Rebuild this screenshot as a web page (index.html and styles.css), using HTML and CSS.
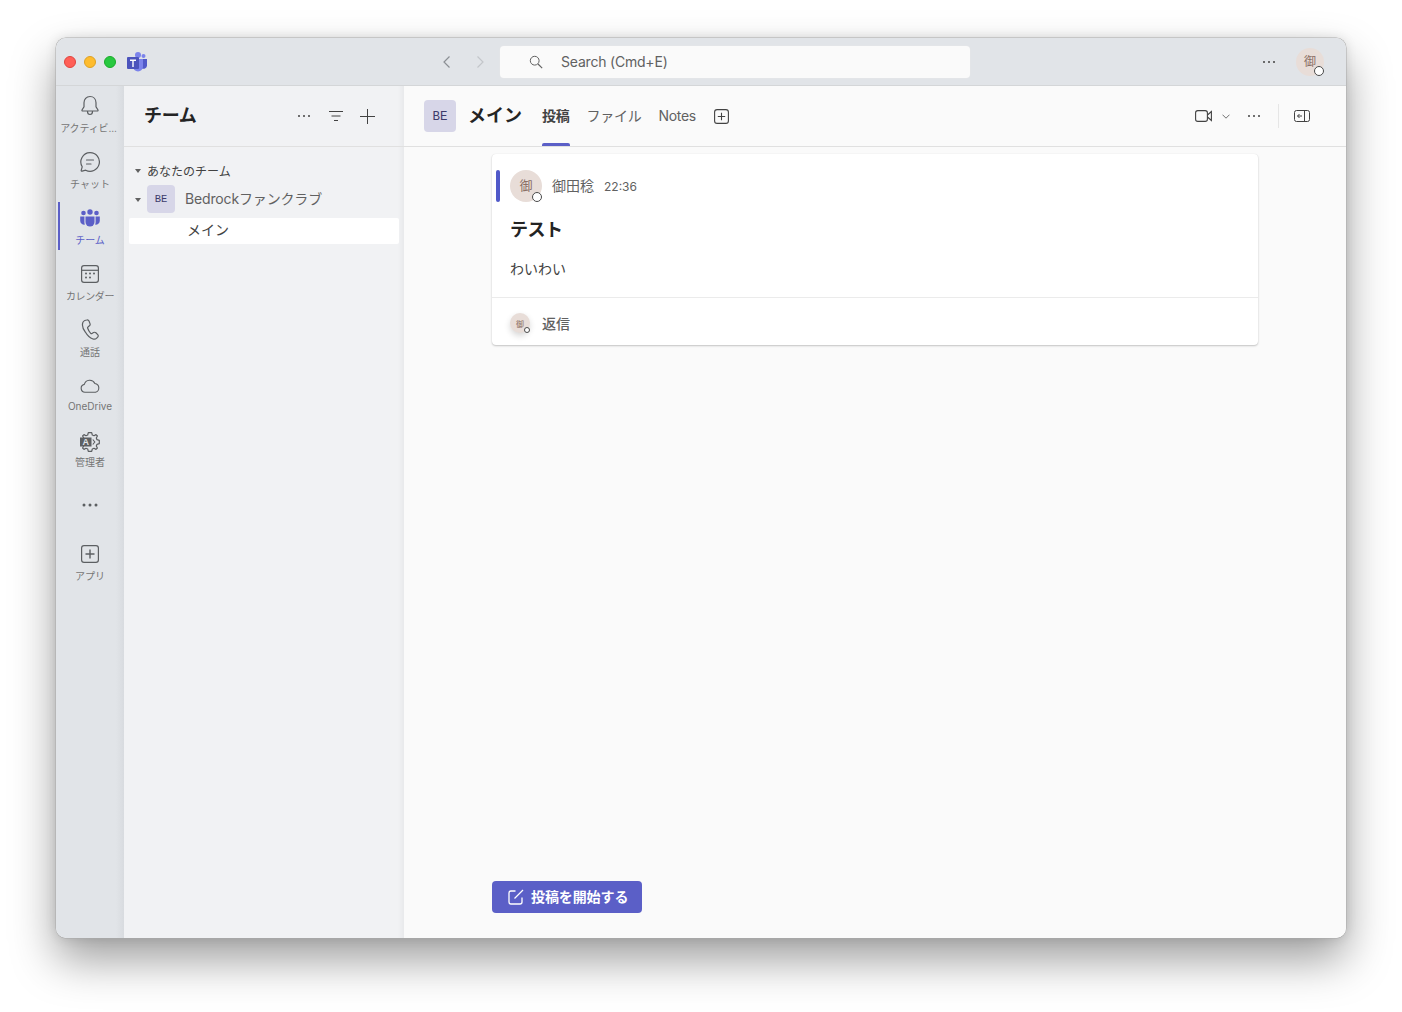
FILE: index.html
```html
<!DOCTYPE html>
<html lang="ja">
<head>
<meta charset="utf-8">
<title>Teams</title>
<link rel="stylesheet" href="styles.css">
</head>
<body>
<div class="window">
  <header class="titlebar">
    <div class="traffic">
      <span class="light red"></span><span class="light yellow"></span><span class="light green"></span>
      <svg class="logo" width="22" height="20" viewBox="0 0 22 20"><circle cx="17.500" cy="4" r="2" fill="#7b83eb"/><path d="M14 7h7v6.500a3.500 3.500 0 0 1-5 3z" fill="#5059c9"/><circle cx="12" cy="3" r="3" fill="#7b83eb"/><path d="M7 7h10v7.500a5 5 0 0 1-10 0z" fill="#7b83eb"/><rect x="1" y="5" width="12" height="12" rx="1" fill="#4b53bc"/><path d="M4 7.600h6v1.300H7.700v6H6.300v-6H4z" fill="#fff"/></svg>
    </div>
    <div class="nav-search">
      <svg class="nav-arrow" width="12" height="14" viewBox="0 0 12 14"><path d="M8.500 1.500 3 7l5.500 5.500" fill="none" stroke="#8b8f94" stroke-width="1.200"/></svg>
      <svg class="nav-arrow" width="12" height="14" viewBox="0 0 12 14"><path d="M3.500 1.500 9 7l-5.500 5.500" fill="none" stroke="#c3c6ca" stroke-width="1.200"/></svg>
      <div class="search">
        <svg width="14" height="14" viewBox="0 0 14 14"><circle cx="5.700" cy="5.700" r="4.400" fill="none" stroke="#616161" stroke-width="1"/><path d="m9 9 4.200 4.200" stroke="#616161" stroke-width="1.100"/></svg>
        <span>Search (Cmd+E)</span>
      </div>
    </div>
    <div class="title-right">
      <svg class="dots" width="14" height="4" viewBox="0 0 14 4"><circle cx="2" cy="2" r="1" fill="#424242"/><circle cx="7" cy="2" r="1" fill="#424242"/><circle cx="12" cy="2" r="1" fill="#424242"/></svg>
      <div class="avatar avatar-top"><b>御</b><i class="presence"></i></div>
    </div>
  </header>
  <div class="body">
    <nav class="rail">
      <div class="rail-item">
        <svg width="20" height="22" viewBox="0 0 20 22"><path d="M10 1.500c3.700 0 6 2.800 6 6.300v4l2 3.200a.7.700 0 0 1-.6 1H2.600a.7.700 0 0 1-.6-1l2-3.200v-4c0-3.500 2.300-6.300 6-6.300zM7.500 16.500c0 1.800 1.100 3 2.500 3s2.500-1.200 2.500-3" fill="none" stroke="#5c5f62" stroke-width="1.200"/></svg>
        <span class="trunc">アクティビ...</span>
      </div>
      <div class="rail-item">
        <svg width="20" height="20" viewBox="0 0 20 20"><path d="M10 .7a9.300 9.300 0 1 1-4.300 17.500l-3.600 1c-.6.100-1-.3-.9-.9l1-3.500A9.300 9.300 0 0 1 10 .7z" fill="none" stroke="#5c5f62" stroke-width="1.200"/><path d="M6.500 8h7M6.500 12h4.500" stroke="#5c5f62" stroke-width="1.200" stroke-linecap="round"/></svg>
        <span>チャット</span>
      </div>
      <div class="rail-item active">
        <svg width="20" height="18" viewBox="0 0 20 18"><circle cx="10" cy="3" r="2.700" fill="#5b5fc7"/><circle cx="3.500" cy="4" r="2.300" fill="#5b5fc7"/><circle cx="16.500" cy="4" r="2.300" fill="#5b5fc7"/><path d="M5.500 7.500h9v5.500a4.500 4.500 0 0 1-9 0z" fill="#5b5fc7"/><path d="M.2 7.500h4.200v6c0 .8.200 1.500.5 2.100A4 4 0 0 1 .2 11.700zM15.600 7.500h4.200v4.200a4 4 0 0 1-4.700 3.900c.3-.6.500-1.300.5-2.100z" fill="#5b5fc7"/></svg>
        <span>チーム</span>
      </div>
      <div class="rail-item">
        <svg width="18" height="18" viewBox="0 0 18 18"><rect x=".6" y=".6" width="16.800" height="16.800" rx="2.400" fill="none" stroke="#5c5f62" stroke-width="1.200"/><path d="M1 5.300h16" stroke="#5c5f62" stroke-width="1.200"/><g fill="#5c5f62"><circle cx="5" cy="8.500" r="1"/><circle cx="9" cy="8.500" r="1"/><circle cx="13" cy="8.500" r="1"/><circle cx="5" cy="12.500" r="1"/><circle cx="9" cy="12.500" r="1"/></g></svg>
        <span class="narrow">カレンダー</span>
      </div>
      <div class="rail-item">
        <svg width="18" height="22" viewBox="0 0 18 22"><path d="M3.800 1.500 5.700 1c1-.3 1.900.2 2.300 1.100l1 2.500c.3.800.1 1.700-.6 2.200L7 8c-.4.300-.5.800-.3 1.300.6 1.800 1.700 3.700 3 5 .4.400.9.400 1.300.2l1.500-.9c.8-.5 1.700-.4 2.400.2l1.800 1.800c.7.700.7 1.800 0 2.500l-1 1c-1 1-2.400 1.300-3.700.9-3-1-5.500-3.200-7.500-6.700C1.600 9.800 1 6.700 1.700 4c.2-1.200 1-2.100 2.100-2.500z" fill="none" stroke="#5c5f62" stroke-width="1.200"/></svg>
        <span>通話</span>
      </div>
      <div class="rail-item tight">
        <svg width="20" height="14" viewBox="0 0 20 14"><path d="M5 13.300a4 4 0 0 1-.7-7.900 5.700 5.700 0 0 1 10.600-.9A4.500 4.500 0 0 1 15.500 13.300z" fill="none" stroke="#5c5f62" stroke-width="1.100"/></svg>
        <span>OneDrive</span>
      </div>
      <div class="rail-item tight">
        <svg width="20" height="20" viewBox="0 0 20 20"><path d="M8.300.7h3.400l.6 2.300 1.700.7 2-1.100L17.400 4l-1.100 2 .7 1.700 2.300.6v3.400l-2.300.6-.7 1.700 1.100 2-1.400 1.400-2-1.100-1.700.7-.6 2.300H8.300L7.700 17 6 16.300l-2 1.100L2.600 16l1.100-2-.7-1.700-2.300-.6V8.300L3 7.700 3.700 6 2.600 4 4 2.600l2 1.100L7.700 3z" fill="none" stroke="#5c5f62" stroke-width="1.200" stroke-linejoin="round"/><rect x="0" y="5.500" width="11.500" height="9" fill="#5c5f62"/><text class="admin-a" x="5.800" y="13.200" text-anchor="middle">A</text><path d="M12.800 7.500l2 2.500-2 2.500" fill="none" stroke="#5c5f62" stroke-width="1.100"/></svg>
        <span>管理者</span>
      </div>
      <div class="rail-more">
        <svg width="16" height="4" viewBox="0 0 16 4"><g fill="#5c5f62"><circle cx="2" cy="2" r="1.500"/><circle cx="8" cy="2" r="1.500"/><circle cx="14" cy="2" r="1.500"/></g></svg>
      </div>
      <div class="rail-item apps">
        <svg width="18" height="18" viewBox="0 0 18 18"><rect x=".6" y=".6" width="16.800" height="16.800" rx="2.400" fill="none" stroke="#5c5f62" stroke-width="1.200"/><path d="M9 4.500v9M4.500 9h9" stroke="#5c5f62" stroke-width="1.400"/></svg>
        <span>アプリ</span>
      </div>
    </nav>
    <aside class="sidebar">
      <div class="side-head">
        <h2>チーム</h2>
        <div class="side-actions">
          <svg width="14" height="4" viewBox="0 0 14 4"><g fill="#424242"><circle cx="2" cy="2" r="1"/><circle cx="7" cy="2" r="1"/><circle cx="12" cy="2" r="1"/></g></svg>
          <svg width="14" height="10" viewBox="0 0 14 10"><path d="M0 .5h14M2.500 5h9M5 9.500h4" stroke="#424242" stroke-width="1"/></svg>
          <svg class="side-plus" width="15" height="15" viewBox="0 0 15 15"><path d="M7.500 0v15M0 7.500h15" stroke="#424242" stroke-width="1"/></svg>
        </div>
      </div>
      <div class="tree">
        <div class="tree-group"><i class="caret"></i><span>あなたのチーム</span></div>
        <div class="tree-team"><i class="caret"></i><div class="team-badge">BE</div><span>Bedrockファンクラブ</span></div>
        <div class="tree-channel"><span>メイン</span></div>
      </div>
    </aside>
    <main class="main">
      <div class="main-head">
        <div class="team-badge large">BE</div>
        <h1>メイン</h1>
        <div class="tabs">
          <a class="tab current">投稿</a>
          <a class="tab">ファイル</a>
          <a class="tab">Notes</a>
          <svg class="tab-add" width="15" height="15" viewBox="0 0 15 15"><rect x=".6" y=".6" width="13.800" height="13.800" rx="2.500" fill="none" stroke="#424242" stroke-width="1.100"/><path d="M7.500 3.800v7.400M3.800 7.500h7.400" stroke="#424242" stroke-width="1.100"/></svg>
        </div>
        <div class="head-actions">
          <svg width="17" height="12" viewBox="0 0 17 12"><rect x=".6" y=".6" width="11.800" height="10.800" rx="2.200" fill="none" stroke="#424242" stroke-width="1.100"/><path d="M12.500 5 16.400 1.500v9L12.500 7" fill="none" stroke="#424242" stroke-width="1.100"/></svg>
          <svg class="chev" width="8" height="5" viewBox="0 0 8 5"><path d="M.5.700 4 4.200 7.500.7" fill="none" stroke="#616161" stroke-width=".9"/></svg>
          <svg class="head-dots" width="14" height="4" viewBox="0 0 14 4"><g fill="#424242"><circle cx="2" cy="2" r="1"/><circle cx="7" cy="2" r="1"/><circle cx="12" cy="2" r="1"/></g></svg>
          <span class="head-sep"></span>
          <svg width="16" height="12" viewBox="0 0 16 12"><rect x=".5" y=".5" width="15" height="11" rx="2" fill="none" stroke="#424242" stroke-width="1"/><path d="M10.500 .5v11" stroke="#424242" stroke-width="1"/><path d="M8 6H3.500M5.500 4 3.500 6l2 2" fill="none" stroke="#424242" stroke-width="1"/></svg>
        </div>
      </div>
      <div class="feed">
        <article class="card">
          <div class="post">
            <div class="post-meta">
              <i class="accent"></i>
              <div class="avatar avatar-post"><b>御</b><i class="presence"></i></div>
              <span class="author">御田稔</span>
              <span class="time">22:36</span>
            </div>
            <h3>テスト</h3>
            <p>わいわい</p>
          </div>
          <div class="reply">
            <div class="avatar avatar-reply"><b>御</b><i class="presence"></i></div>
            <span>返信</span>
          </div>
        </article>
        <button class="start">
          <svg width="16" height="16" viewBox="0 0 16 16"><path d="M7.500 2H3a2 2 0 0 0-2 2v9a2 2 0 0 0 2 2h9a2 2 0 0 0 2-2V8.500" fill="none" stroke="#fff" stroke-width="1.300"/><path d="M6.500 9.500 15 1" stroke="#fff" stroke-width="1.300"/></svg>
          <span>投稿を開始する</span>
        </button>
      </div>
    </main>
  </div>
</div>
</body>
</html>
```
FILE: styles.css
```css
* { box-sizing: border-box; }
html, body { height: 100%; }
body {
  margin: 0;
  padding: 38px 56px 74px;
  background: #fff;
  font-family: Inter, "Noto Sans CJK JP", sans-serif;
  color: #424242;
  overflow: hidden;
}
.window {
  height: 900px;
  display: flex;
  flex-direction: column;
  border-radius: 10px;
  overflow: hidden;
  box-shadow: 0 0 0 .5px #a9a9a9, 0 22px 45px rgba(0,0,0,.38), 0 0 12px rgba(0,0,0,.12);
}
.titlebar {
  height: 48px;
  flex: none;
  display: flex;
  align-items: center;
  background: #e1e4e8;
  border-bottom: 1px solid #d4d6d8;
}
.traffic { display: flex; align-items: center; padding-left: 8px; gap: 8px; width: 385px; }
.light { width: 12px; height: 12px; border-radius: 50%; }
.red { background: #ff5f57; border: .5px solid #e0443e; }
.yellow { background: #febc2e; border: .5px solid #dea123; }
.green { background: #28c840; border: .5px solid #1aab29; }
.logo { margin-left: 2px; }
.nav-search { display: flex; align-items: center; }
.nav-arrow { margin-right: 21px; }
.nav-arrow + .nav-arrow { margin-right: 14px; }
.search {
  width: 470px;
  height: 32px;
  margin-top: 1px;
  background: #fafafa;
  border-radius: 4px;
  display: flex;
  align-items: center;
  gap: 18px;
  padding-left: 29px;
  font-size: 14px;
  letter-spacing: -.2px;
  color: #616161;
  box-shadow: 0 0 0 .5px #e5e6e8;
}
.search span { padding-bottom: 2px; }
.title-right { margin-left: auto; display: flex; align-items: center; gap: 20px; padding-right: 22px; }
.avatar {
  border-radius: 50%;
  background: #e8ddd8;
  color: #8a6f65;
  display: flex;
  align-items: center;
  justify-content: center;
  position: relative;
  flex: none;
}
.avatar b { font-weight: 400; line-height: 1; padding-bottom: 1px; }
.avatar-top { width: 28px; height: 28px; font-size: 12px; }
.avatar-top b { padding: 1px 0 0; }
.avatar-post { width: 32px; height: 32px; font-size: 13px; }
.avatar-reply { width: 20px; height: 20px; font-size: 8px; box-shadow: 0 3px 6px rgba(0,0,0,.16); }
.avatar-reply b { padding: 2px 0 0; }
.presence {
  position: absolute;
  right: 0;
  bottom: 0;
  width: 10px;
  height: 10px;
  border-radius: 50%;
  background: #fff;
  border: 1px solid #4a4a4a;
}
.avatar-reply .presence { width: 6px; height: 6px; }
.body { flex: 1; display: flex; min-height: 0; }
.rail {
  width: 68px;
  flex: none;
  background: linear-gradient(to right, #e1e4e8 0, #e1e4e8 60px, #d8dbdf 100%);
  padding-top: 4px;
  display: flex;
  flex-direction: column;
  align-items: stretch;
}
.rail-item {
  height: 56px;
  display: flex;
  flex-direction: column;
  align-items: center;
  justify-content: flex-start;
  padding-top: 4px;
  font-size: 10px;
  color: #757575;
  position: relative;
  line-height: 14px;
}
.rail-item svg { height: 24px; flex: none; }
.rail-item span { margin-top: 3px; white-space: nowrap; }
.rail-item span.trunc { margin-right: 3px; letter-spacing: -.1px; }
.rail-item span.narrow { letter-spacing: -.4px; }
.rail-item.tight span { margin-top: 1px; }
.rail-item.active { color: #5b5fc7; }
.rail-item.active::before {
  content: "";
  position: absolute;
  left: 2px;
  top: 0;
  bottom: 8px;
  width: 2px;
  background: #5b5fc7;
}
.admin-a { font-family: "Liberation Sans", sans-serif; font-size: 9px; font-weight: 700; fill: #e1e4e8; }
.rail-more { height: 45px; display: flex; align-items: center; justify-content: center; }
.apps { margin-top: 11px; }
.sidebar {
  width: 280px;
  flex: none;
  background: linear-gradient(to right, #f1f2f4 0, #f1f2f4 274px, #e8e9eb 100%);
  display: flex;
  flex-direction: column;
}
.side-head {
  height: 61px;
  flex: none;
  display: flex;
  align-items: center;
  padding: 0 29px 0 20px;
  border-bottom: 1px solid #e0e0e0;
}
.side-head h2 { margin: 0; font-size: 18px; font-weight: 700; letter-spacing: -.3px; color: #242424; line-height: 1; flex: 1; }
.side-actions { display: flex; align-items: center; gap: 18px; }
.side-plus { margin-left: -1px; }
.tree { padding: 13px 5px 0; font-size: 14px; }
.tree-group {
  height: 20px;
  display: flex;
  align-items: center;
  padding-left: 6px;
  font-size: 12px;
  color: #424242;
}
.caret {
  width: 0;
  height: 0;
  border-left: 3.500px solid transparent;
  border-right: 3.500px solid transparent;
  border-top: 4.500px solid #616161;
  margin-right: 6px;
  margin-top: 2px;
  flex: none;
}
.tree-team {
  height: 28px;
  margin-top: 5px;
  display: flex;
  align-items: center;
  padding-left: 6px;
  color: #616161;
}
.tree-team span { margin-left: 10px; padding-bottom: 2px; letter-spacing: -.15px; }
.team-badge {
  width: 28px;
  height: 28px;
  border-radius: 4px;
  background: #d7d6e8;
  color: #3d3b6b;
  font-size: 10.500px;
  display: flex;
  align-items: center;
  justify-content: center;
  flex: none;
  font-family: "Liberation Mono", monospace;
}
.tree-channel {
  height: 26px;
  margin-top: 5px;
  background: #fff;
  border-radius: 2px;
  padding-left: 58px;
  display: flex;
  align-items: center;
  font-size: 14px;
  color: #424242;
}
.tree-channel span { padding-bottom: 4px; }
.main { flex: 1; min-width: 0; background: #fafafa; display: flex; flex-direction: column; }
.main-head {
  height: 61px;
  flex: none;
  display: flex;
  align-items: center;
  padding: 0 36px 0 20px;
  border-bottom: 1px solid #e0e0e0;
}
.team-badge.large { width: 32px; height: 32px; font-size: 12.500px; padding-top: 1px; }
.main-head h1 { margin: 0 20px 0 12px; font-size: 18px; font-weight: 700; color: #242424; line-height: 1; }
.tabs { display: flex; align-items: center; gap: 17px; height: 100%; }
.tab {
  height: 100%;
  display: flex;
  align-items: center;
  padding-bottom: 2px;
  font-size: 14px;
  letter-spacing: -.3px;
  color: #616161;
  position: relative;
}
.tab.current { font-weight: 700; color: #424242; letter-spacing: -.2px; }
.tab.current::after {
  content: "";
  position: absolute;
  left: 0;
  right: 0;
  bottom: 0;
  height: 3px;
  background: #5b5fc7;
  border-radius: 2px 2px 0 0;
}
.tab-add { margin-left: 1px; }
.head-actions { margin-left: auto; display: flex; align-items: center; }
.chev { margin-left: 10px; }
.head-dots { margin-left: 17px; }
.head-sep { width: 1px; height: 24px; background: #e6e6e6; margin: 0 15px 0 17px; }
.feed {
  flex: 1;
  min-height: 0;
  padding: 7px 88px 25px;
  display: flex;
  flex-direction: column;
}
.card {
  background: #fff;
  border-radius: 4px;
  box-shadow: 0 1px 2px rgba(0,0,0,.22), 0 0 1px rgba(0,0,0,.1);
  flex: none;
}
.post { padding: 16px 18px 0; height: 144px; border-bottom: 1px solid #ebebeb; }
.post-meta { display: flex; align-items: center; height: 32px; position: relative; }
.accent {
  position: absolute;
  left: -14px;
  top: 0;
  width: 4px;
  height: 32px;
  background: #5059c9;
  border-radius: 2px;
}
.author { margin-left: 10px; padding-bottom: 2px; font-size: 14px; color: #616161; }
.time { margin-left: 10px; font-size: 12px; color: #616161; }
.post h3 { margin: 16px 0 0; font-size: 18px; font-weight: 700; letter-spacing: -.5px; color: #242424; line-height: 24px; }
.post p { margin: 17px 0 0; font-size: 14px; line-height: 20px; color: #424242; }
.reply { height: 47px; display: flex; align-items: center; gap: 12px; padding: 2px 0 0 18px; font-size: 14px; font-weight: 500; color: #616161; }
.start {
  margin-top: auto;
  width: 150px;
  height: 32px;
  border: 0;
  border-radius: 4px;
  background: #5b5fc7;
  color: #fff;
  font: 700 14px Inter, "Noto Sans CJK JP", sans-serif;
  display: flex;
  align-items: center;
  gap: 7px;
  padding: 0 0 0 16px;
}
.start span { padding-bottom: 2px; letter-spacing: -.1px; }
```
